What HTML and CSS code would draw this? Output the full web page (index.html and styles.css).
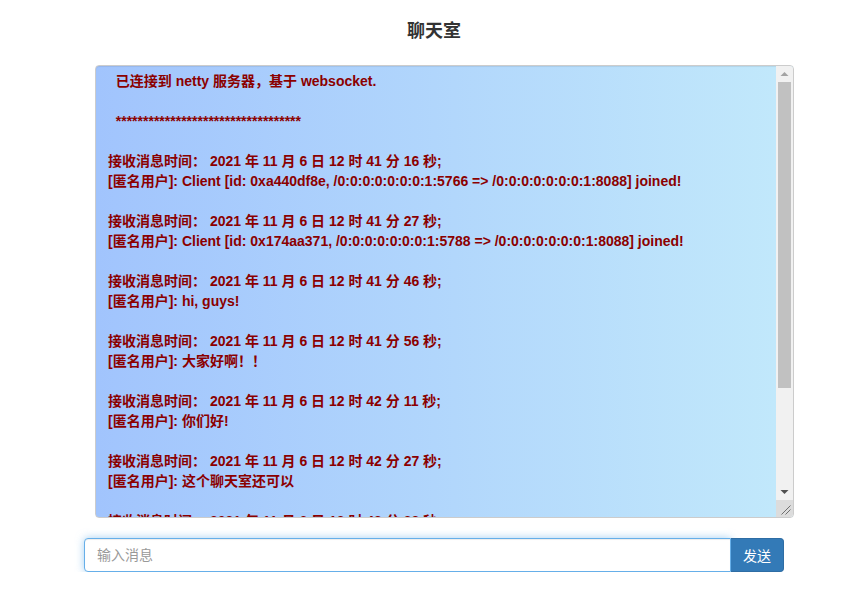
FILE: index.html
```html
<!DOCTYPE html>
<html lang="zh">
<head>
<meta charset="utf-8">
<title>聊天室</title>
<link rel="stylesheet" href="styles.css">
</head>
<body>
<div class="page">
  <h3 class="title">聊天室</h3>
  <div class="log">
    <div class="log-text">  已连接到 netty 服务器，基于 websocket.

  **********************************

接收消息时间： 2021 年 11 月 6 日 12 时 41 分 16 秒;
[匿名用户]: Client [id: 0xa440df8e, /0:0:0:0:0:0:0:1:5766 => /0:0:0:0:0:0:0:1:8088] joined!

接收消息时间： 2021 年 11 月 6 日 12 时 41 分 27 秒;
[匿名用户]: Client [id: 0x174aa371, /0:0:0:0:0:0:0:1:5788 => /0:0:0:0:0:0:0:1:8088] joined!

接收消息时间： 2021 年 11 月 6 日 12 时 41 分 46 秒;
[匿名用户]: hi, guys!

接收消息时间： 2021 年 11 月 6 日 12 时 41 分 56 秒;
[匿名用户]: 大家好啊！！

接收消息时间： 2021 年 11 月 6 日 12 时 42 分 11 秒;
[匿名用户]: 你们好!

接收消息时间： 2021 年 11 月 6 日 12 时 42 分 27 秒;
[匿名用户]: 这个聊天室还可以

接收消息时间： 2021 年 11 月 6 日 12 时 42 分 38 秒;
[匿名用户]: 是的

接收消息时间： 2021 年 11 月 6 日 12 时 42 分 51 秒;
[匿名用户]: 欢迎大家</div>
    <div class="scrollbar">
      <div class="sb-btn">
        <svg width="17" height="16" viewBox="0 0 17 16"><path d="M4.5 10h8L8.5 6z" fill="#a3a3a3"/></svg>
      </div>
      <div class="sb-track"><div class="sb-thumb"></div></div>
      <div class="sb-btn">
        <svg width="17" height="16" viewBox="0 0 17 16"><path d="M4.5 6h8L8.5 10z" fill="#505050"/></svg>
      </div>
      <div class="sb-corner">
        <svg width="17" height="16" viewBox="0 0 17 16"><path d="M14.5 5.5L5.5 14.5M14.5 9.5L9.5 14.5" stroke="#6f6f6f" stroke-width="1"/></svg>
      </div>
    </div>
  </div>
  <div class="input-group">
    <input class="msg" type="text" placeholder="输入消息">
    <button class="send" type="button">发送</button>
  </div>
</div>
</body>
</html>
```
FILE: styles.css
```css
html, body {
  margin: 0;
  padding: 0;
  background: #fff;
}
body {
  font-family: "Liberation Sans", "Noto Sans CJK SC", sans-serif;
  color: #333;
}
.page {
  width: 700px;
  margin-left: 84px;
  display: flex;
  flex-direction: column;
}
.title {
  margin: 18px 0 0 0;
  height: 47px;
  font-size: 18px;
  font-weight: bold;
  text-align: center;
  line-height: 26px;
}
.log {
  box-sizing: border-box;
  margin: 0 0 0 11px;
  width: 699px;
  height: 453px;
  display: flex;
  border: 1px solid #ccc;
  border-radius: 4px;
  box-shadow: inset 0 1px 1px rgba(0,0,0,.075);
  background: linear-gradient(to right, #a1c4fd, #c2e9fb);
  overflow: hidden;
}
.log-text {
  flex: 1;
  min-width: 0;
  padding: 5px 12px 0 12px;
  overflow: hidden;
  white-space: pre;
  color: #8b0000;
  font-family: "Liberation Sans", "Noto Sans CJK SC", sans-serif;
  font-size: 14px;
  font-weight: bold;
  line-height: 20px;
}
.scrollbar {
  width: 17px;
  flex: none;
  display: flex;
  flex-direction: column;
  background: #f1f1f1;
}
.sb-btn {
  height: 16px;
  flex: none;
  display: flex;
}
.sb-track {
  flex: 1;
  display: flex;
  flex-direction: column;
}
.sb-thumb {
  height: 306px;
  margin: 0 2px 0 2px;
  background: #c1c1c1;
}
.sb-corner {
  height: 17px;
  flex: none;
  display: flex;
  background: #dcdcdc;
}
.input-group {
  display: flex;
  margin-top: 20px;
  height: 34px;
}
.msg {
  flex: 1;
  box-sizing: border-box;
  height: 34px;
  padding: 6px 12px;
  font-size: 14px;
  font-family: "Liberation Sans", "Noto Sans CJK SC", sans-serif;
  color: #555;
  border: 1px solid #66afe9;
  border-radius: 4px 0 0 4px;
  outline: 0;
  box-shadow: inset 0 1px 1px rgba(0,0,0,.075), 0 0 8px rgba(102,175,233,.6);
}
.msg::placeholder {
  color: #999;
}
.send {
  box-sizing: border-box;
  width: 53px;
  height: 34px;
  padding: 6px 12px;
  font-size: 14px;
  font-family: "Liberation Sans", "Noto Sans CJK SC", sans-serif;
  color: #fff;
  background: #337ab7;
  border: 1px solid #2e6da4;
  border-left: 0;
  border-radius: 0 4px 4px 0;
}
```
